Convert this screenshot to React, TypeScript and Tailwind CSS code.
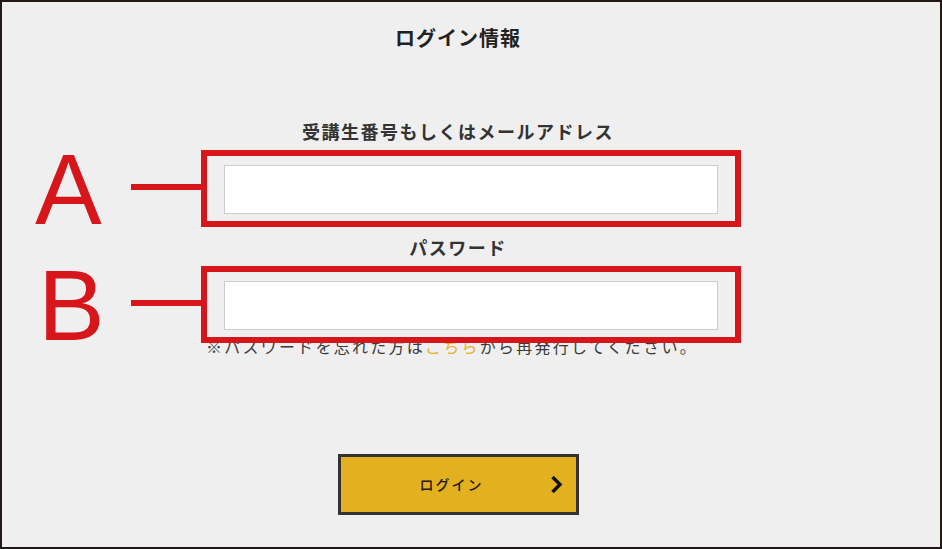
import React from "react";

const jp = { fontFamily: '"Noto Sans CJK JP", "Noto Sans", sans-serif' };
const latin = { fontFamily: '"Liberation Sans", Arial, sans-serif' };

function Field({ letter }: { letter: "A" | "B" }) {
  return (
    <div className="relative ml-[26px] h-[49px] w-[494px]">
      <div className="h-full w-full border border-[#cccccc] bg-white" />
      <div className="absolute -left-[23px] -right-[23px] -top-[15px] -bottom-[13px] z-10 border-[6px] border-[#d7161b]" />
      <div className="absolute left-[-93px] top-[19px] h-[6px] w-[70px] bg-[#d7161b]" />
      <div
        className={`absolute top-[-26px] text-[100px] leading-[100px] text-[#d7161b] ${
          letter === "A" ? "left-[-189px]" : "left-[-186px]"
        }`}
        style={latin}
      >
        {letter}
      </div>
    </div>
  );
}

export default function App() {
  return (
    <div
      className="box-border flex h-[549px] w-[942px] flex-col items-center border-2 border-[#231815] bg-[#efefef] pr-[26px] text-[#333333]"
      style={jp}
    >
      <div className="mt-[22px] text-[20px] font-bold leading-[28px] tracking-[1px] text-[#222222]">
        ログイン情報
      </div>
      <div className="mt-[66px] text-[18px] font-bold leading-[26px] tracking-[1.5px]">
        受講生番号もしくはメールアドレス
      </div>
      <div className="mt-[21px]">
        <Field letter="A" />
      </div>
      <div className="mt-[20px] text-[18px] font-bold leading-[26px] tracking-[1.5px]">
        パスワード
      </div>
      <div className="mt-[21px]">
        <Field letter="B" />
      </div>
      <div className="mt-[4px] mr-[12px] text-[16px] leading-[24px] tracking-[2.25px] text-[#3a3a3a]">
        ※パスワードを忘れた方は<span className="text-[#e8b21e]">こちら</span>から再発行してください。
      </div>
      <button className="mt-[96px] box-border flex h-[61px] w-[241px] items-center border-[3px] border-[#333333] bg-[#e3b11f] pl-[79px] pr-[10px]">
        <span className="text-[14px] font-medium tracking-[2px] text-[#231815]" style={jp}>
          ログイン
        </span>
        <svg className="ml-auto mr-[3px]" width="13" height="19" viewBox="0 0 13 19">
          <path d="M2.5 2 L10 9.5 L2.5 17" fill="none" stroke="#111111" strokeWidth="3.4" />
        </svg>
      </button>
    </div>
  );
}
